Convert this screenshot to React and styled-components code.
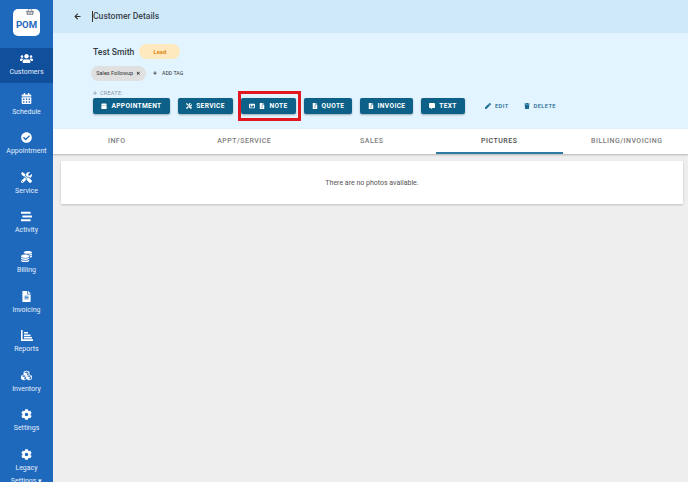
import React from 'react';
import styled, { createGlobalStyle } from 'styled-components';
import {
  FaUsers, FaCalendarAlt, FaCheckCircle, FaTools, FaCoins, FaFileAlt,
  FaCubes, FaCog, FaCalendar, FaCommentAlt, FaPen, FaTrash, FaArrowLeft, FaImage,
  FaShoppingBasket, FaPlus, FaTimes, FaStream,
} from 'react-icons/fa';

const GlobalStyle = createGlobalStyle`
  html, body {
    margin: 0;
    height: 100%;
    overflow: hidden;
    background: #eeeeee;
    font-family: Roboto, "Liberation Sans", sans-serif;
  }
  * { box-sizing: border-box; }
`;

const Page = styled.div`
  display: flex;
  width: 688px;
  height: 482px;
  overflow: hidden;
`;

const Sidebar = styled.nav`
  flex: 0 0 53px;
  height: 482px;
  overflow: hidden;
  background: #1f69bd;
  display: flex;
  flex-direction: column;
  align-items: stretch;
`;

const LogoBox = styled.div`
  position: relative;
  flex: none;
  width: 27px;
  height: 27px;
  margin: 9px auto 12px;
  background: #fff;
  border-radius: 5px;
  color: #1f69bd;
  font-size: 9.6px;
  font-weight: 700;
  display: flex;
  align-items: center;
  justify-content: center;
  padding-top: 4px;
`;

const LogoCart = styled.span`
  position: absolute;
  top: -1px;
  left: 13px;
  font-size: 8px;
  line-height: 1;
  color: #8a8f96;
`;

const NavItem = styled.div`
  height: ${(p) => (p.$tall ? '56px' : '35px')};
  margin-bottom: ${(p) => (p.$tall ? '0' : '4.6px')};
  flex: none;
  background: ${(p) => (p.$active ? '#0f4f9c' : 'transparent')};
  color: #e3eefa;
  display: flex;
  flex-direction: column;
  align-items: center;
  padding-top: 5px;
  font-size: 7px;
  line-height: 10px;
  text-align: center;
  white-space: nowrap;

  svg {
    width: 13px;
    height: 11px;
    margin-bottom: 3px;
    color: #fff;
    flex: none;
  }
`;

const SmallLine = styled.span`
  display: block;
  margin-top: 3px;
`;

const Main = styled.main`
  flex: 1;
  min-width: 0;
  display: flex;
  flex-direction: column;
`;

const TopBar = styled.header`
  flex: none;
  height: 33px;
  background: #cfe9f8;
  display: flex;
  align-items: center;
  padding-left: 21px;
  color: #3c4650;
  font-size: 8.6px;
  font-weight: 500;
  gap: 11px;

  svg {
    font-size: 7px;
    color: #333;
  }
`;

const TitleText = styled.span`
  border-left: 1px solid #333;
  line-height: 11px;
`;

const DetailPanel = styled.section`
  flex: none;
  height: 96px;
  background: #e2f4ff;
  padding: 11px 0 0 40px;
  display: flex;
  flex-direction: column;
`;

const NameRow = styled.div`
  display: flex;
  align-items: center;
  gap: 5px;
  height: 15px;
`;

const Name = styled.span`
  font-size: 8.6px;
  color: #333c44;
  font-weight: 500;
`;

const LeadBadge = styled.span`
  width: 41px;
  height: 15px;
  border-radius: 8px;
  background: #fde9bd;
  color: #dd8a1e;
  font-size: 5.8px;
  font-weight: 700;
  display: flex;
  align-items: center;
  justify-content: center;
`;

const TagRow = styled.div`
  display: flex;
  align-items: center;
  height: 16px;
  margin-top: 6px;
  margin-left: -2px;
  gap: 7px;
`;

const Tag = styled.span`
  height: 15px;
  width: 55px;
  border-radius: 8px;
  background: #e0e0e0;
  color: #333;
  font-size: 5.5px;
  display: flex;
  align-items: center;
  justify-content: center;
  gap: 3px;
  white-space: nowrap;

  svg {
    font-size: 4.5px;
    flex: none;
  }
`;

const AddTag = styled.span`
  display: flex;
  align-items: center;
  gap: 5px;
  color: #333;
  font-size: 5.2px;

  svg {
    font-size: 4px;
  }
`;

const CreateLabel = styled.div`
  display: flex;
  align-items: center;
  gap: 3px;
  height: 7px;
  margin-top: 8px;
  color: #8b979f;
  font-size: 5.6px;
  letter-spacing: 0.2px;

  svg {
    font-size: 4px;
  }
`;

const ActionRow = styled.div`
  display: flex;
  align-items: center;
  gap: 8px;
  margin-top: 2px;
`;

const ActionButton = styled.button`
  position: relative;
  width: ${(p) => p.$w}px;
  height: 16px;
  border: 0;
  border-radius: 2px;
  padding: 0;
  background: #0d6189;
  box-shadow: 0 1px 2px rgba(0, 0, 0, 0.3);
  color: #fff;
  font-family: inherit;
  font-size: 6.6px;
  font-weight: 700;
  letter-spacing: 0.35px;
  display: flex;
  align-items: center;
  justify-content: center;
  gap: 4px;

  svg {
    font-size: 6px;
  }
`;

const Highlight = styled.span`
  position: absolute;
  left: -3px;
  top: -7px;
  width: 63px;
  height: 30px;
  border: 3px solid #e2171f;
`;

const TextAction = styled.span`
  display: flex;
  align-items: center;
  gap: 4px;
  color: #1a6a92;
  font-size: 5.8px;
  font-weight: 500;
  letter-spacing: 0.35px;
  margin-left: ${(p) => p.$ml}px;

  svg {
    font-size: 6px;
  }
`;

const Tabs = styled.div`
  flex: none;
  height: 25px;
  background: #fff;
  display: grid;
  grid-template-columns: repeat(5, 127.5px);
  box-shadow: 0 1px 2px rgba(0, 0, 0, 0.25);
`;

const Tab = styled.div`
  display: flex;
  align-items: center;
  justify-content: center;
  font-size: 7px;
  font-weight: 500;
  letter-spacing: 0.5px;
  color: ${(p) => (p.$active ? '#4b4b4b' : '#7d7d7d')};
  border-bottom: 2px solid ${(p) => (p.$active ? '#2f7aa3' : 'transparent')};
`;

const Content = styled.div`
  flex: 1;
  padding: 7px 5px 0 8px;
`;

const EmptyCard = styled.div`
  height: 43px;
  background: #fff;
  box-shadow: 0 1px 2px rgba(0, 0, 0, 0.2);
  display: flex;
  align-items: center;
  justify-content: center;
  color: #555;
  font-size: 7px;
`;

// axis with horizontal bars, none of the packages has this one
const ReportsIcon = () => (
  <svg viewBox="0 0 13 11" fill="currentColor">
    <path d="M1 0h1.6v9.2H13V11H1z" />
    <path d="M4 2h4v1.6H4zM4 4.6h6.5v1.6H4zM4 7h8v1.4H4z" />
  </svg>
);

const navItems = [
  { label: 'Customers', icon: FaUsers, active: true },
  { label: 'Schedule', icon: FaCalendarAlt },
  { label: 'Appointment', icon: FaCheckCircle },
  { label: 'Service', icon: FaTools },
  { label: 'Activity', icon: FaStream },
  { label: 'Billing', icon: FaCoins },
  { label: 'Invoicing', icon: FaFileAlt },
  { label: 'Reports', icon: ReportsIcon },
  { label: 'Inventory', icon: FaCubes },
  { label: 'Settings', icon: FaCog },
];

const tabs = ['INFO', 'APPT/SERVICE', 'SALES', 'PICTURES', 'BILLING/INVOICING'];

export default function App() {
  return (
    <Page>
      <GlobalStyle />
      <Sidebar>
        <LogoBox>
          <LogoCart><FaShoppingBasket /></LogoCart>
          POM
        </LogoBox>
        {navItems.map(({ label, icon: Icon, active }) => (
          <NavItem key={label} $active={active}>
            <Icon />
            {label}
          </NavItem>
        ))}
        <NavItem $tall>
          <FaCog />
          Legacy
          <SmallLine>Settings ▾</SmallLine>
        </NavItem>
      </Sidebar>
      <Main>
        <TopBar>
          <FaArrowLeft />
          <TitleText>Customer Details</TitleText>
        </TopBar>
        <DetailPanel>
          <NameRow>
            <Name>Test Smith</Name>
            <LeadBadge>Lead</LeadBadge>
          </NameRow>
          <TagRow>
            <Tag>Sales Followup <FaTimes /></Tag>
            <AddTag><FaPlus /> ADD TAG</AddTag>
          </TagRow>
          <CreateLabel><FaPlus /> CREATE:</CreateLabel>
          <ActionRow>
            <ActionButton $w={77}><FaCalendar /> APPOINTMENT</ActionButton>
            <ActionButton $w={55}><FaTools /> SERVICE</ActionButton>
            <ActionButton $w={55}>
              <FaImage /> <FaFileAlt /> NOTE
              <Highlight />
            </ActionButton>
            <ActionButton $w={48}><FaFileAlt /> QUOTE</ActionButton>
            <ActionButton $w={53}><FaFileAlt /> INVOICE</ActionButton>
            <ActionButton $w={44}><FaCommentAlt /> TEXT</ActionButton>
            <TextAction $ml={12}><FaPen /> EDIT</TextAction>
            <TextAction $ml={7}><FaTrash /> DELETE</TextAction>
          </ActionRow>
        </DetailPanel>
        <Tabs>
          {tabs.map((t) => (
            <Tab key={t} $active={t === 'PICTURES'}>{t}</Tab>
          ))}
        </Tabs>
        <Content>
          <EmptyCard>There are no photos available.</EmptyCard>
        </Content>
      </Main>
    </Page>
  );
}
